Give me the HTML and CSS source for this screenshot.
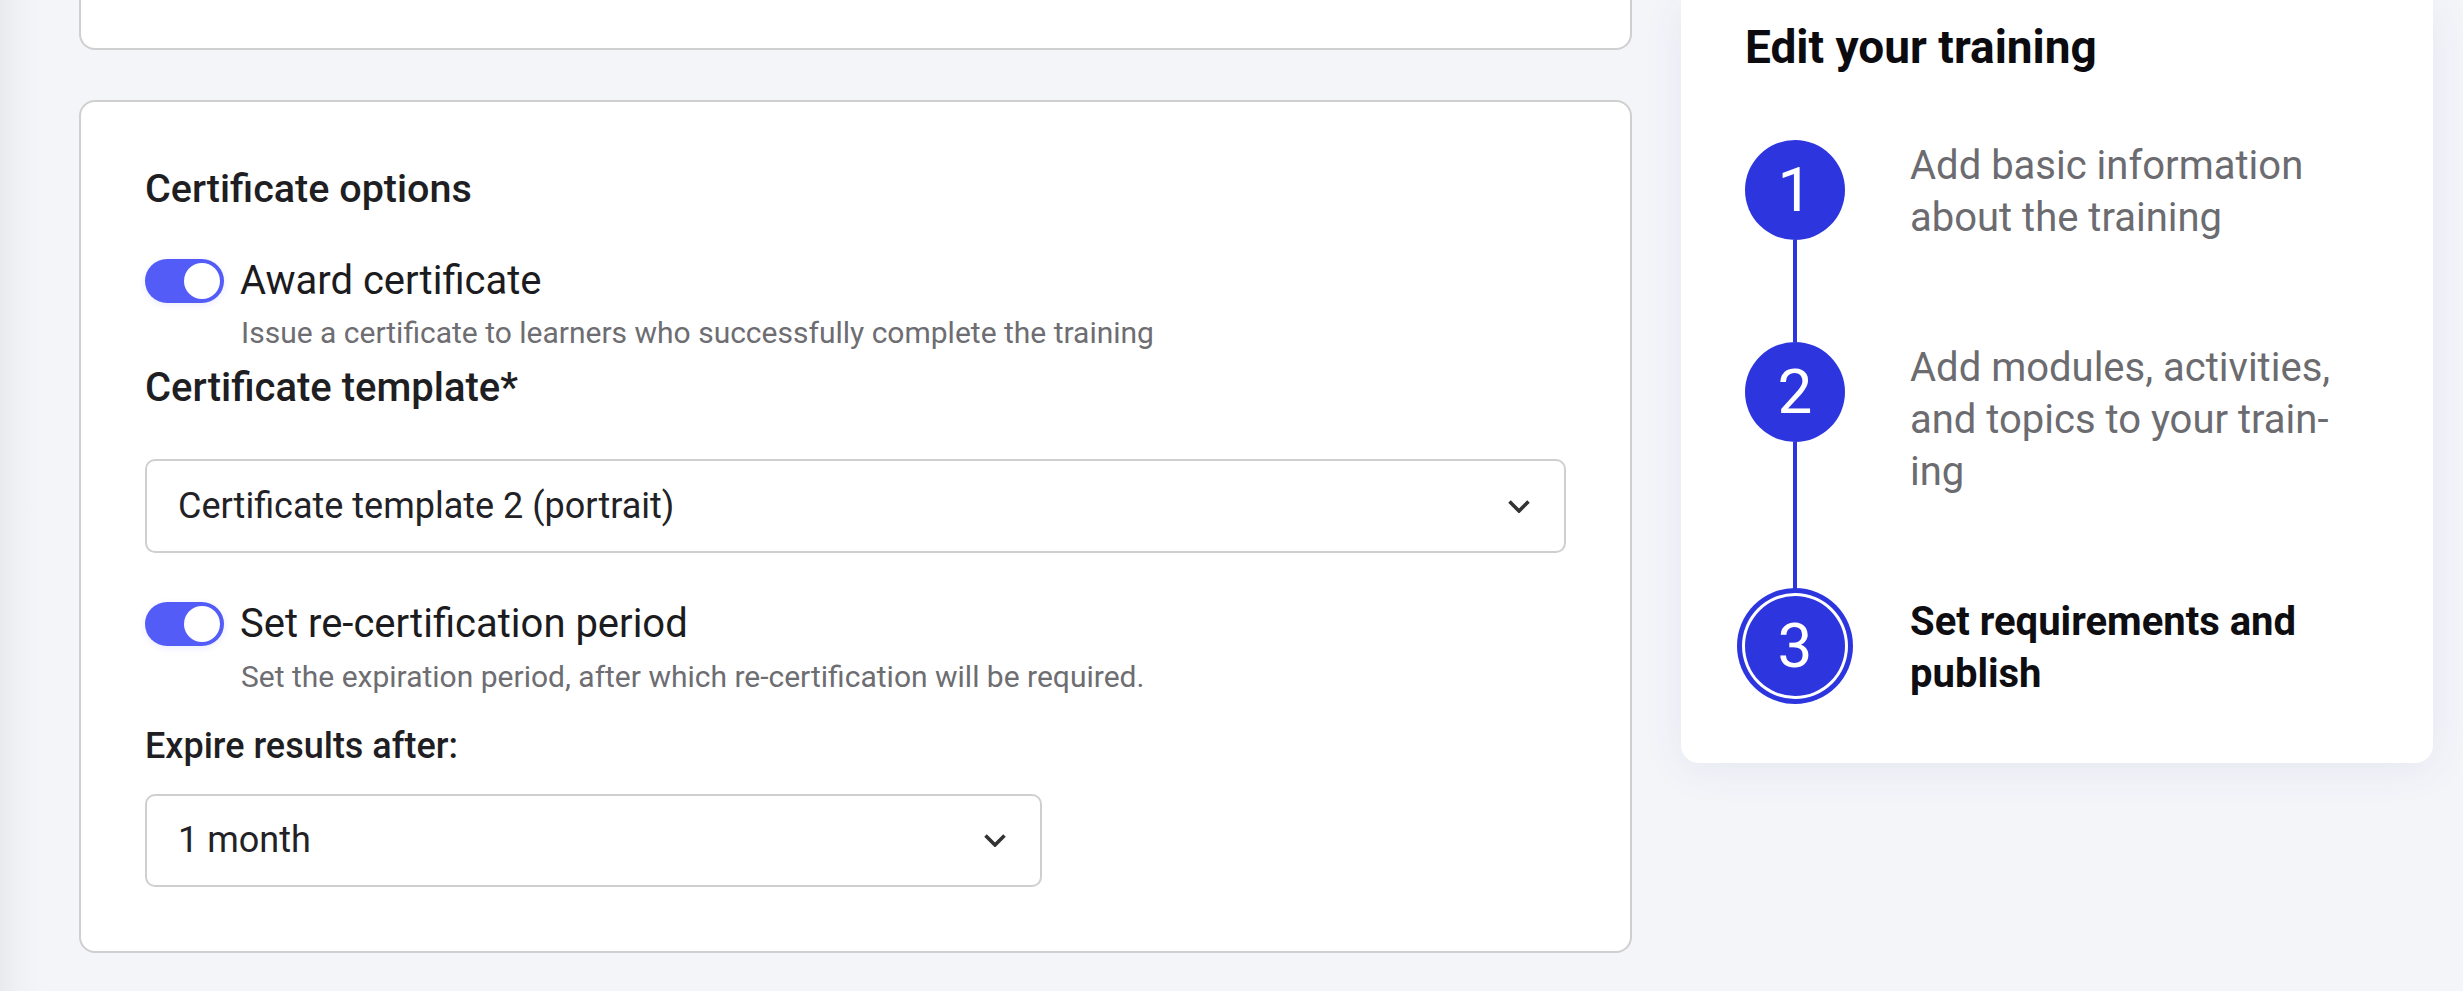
FILE: index.html
```html
<!DOCTYPE html>
<html lang="en">
<head>
<meta charset="utf-8">
<title>Certificate options</title>
<link rel="stylesheet" href="styles.css">
</head>
<body>
<div class="page">
  <div class="main">
    <div class="card card-top"></div>
    <section class="card card-cert">
      <h2 class="heading">Certificate options</h2>
      <div class="toggle-row">
        <span class="toggle"><span class="knob"></span></span>
        <span class="toggle-label">Award certificate</span>
      </div>
      <p class="desc">Issue a certificate to learners who successfully complete the training</p>
      <label class="field-label">Certificate template*</label>
      <div class="select select-wide">
        <span class="select-text">Certificate template 2 (portrait)</span>
        <svg class="chev" width="22" height="13" viewBox="0 0 22 13"><polyline points="1.5,1.5 11,11 20.5,1.5" fill="none" stroke="#333" stroke-width="3.6"/></svg>
      </div>
      <div class="toggle-row toggle-row-2">
        <span class="toggle"><span class="knob"></span></span>
        <span class="toggle-label">Set re-certification period</span>
      </div>
      <p class="desc desc-2">Set the expiration period, after which re-certification will be required.</p>
      <label class="expire-label">Expire results after:</label>
      <div class="select select-narrow">
        <span class="select-text">1 month</span>
        <svg class="chev" width="22" height="13" viewBox="0 0 22 13"><polyline points="1.5,1.5 11,11 20.5,1.5" fill="none" stroke="#333" stroke-width="3.6"/></svg>
      </div>
    </section>
  </div>
  <aside class="panel">
    <h2 class="panel-title">Edit your training</h2>
    <ol class="steps">
      <li class="step">
        <span class="circle">1</span>
        <span class="step-text">Add basic information about the training</span>
      </li>
      <li class="step">
        <span class="circle">2</span>
        <span class="step-text">Add modules, activities, and topics to your train&shy;ing</span>
      </li>
      <li class="step step-active">
        <span class="circle">3</span>
        <span class="step-text">Set requirements and publish</span>
      </li>
    </ol>
  </aside>
</div>
</body>
</html>
```

FILE: styles.css
```css
* { box-sizing: border-box; }
html, body { margin: 0; padding: 0; }
body {
  width: 2463px;
  height: 991px;
  overflow: hidden;
  font-family: Roboto, "Liberation Sans", sans-serif;
  background: linear-gradient(90deg, #e9eaee 0px, #f0f1f5 18px, #f4f5f9 42px);
}
.page {
  display: flex;
  align-items: flex-start;
  gap: 49px;
  padding-left: 79px;
}
.main {
  width: 1553px;
  display: flex;
  flex-direction: column;
}
.card {
  background: #fff;
  border: 2px solid #cfcfcf;
  border-radius: 16px;
}
.card-top {
  height: 50px;
  border-top: 0;
  border-radius: 0 0 16px 16px;
}
.card-cert {
  margin-top: 50px;
  padding: 62px 64px 64px 64px;
  display: flex;
  flex-direction: column;
  align-items: flex-start;
}
.heading {
  margin: 0;
  font-size: 39.5px;
  line-height: 50px;
  font-weight: 500;
  color: #1e1e23;
}
.toggle-row {
  display: flex;
  align-items: center;
  gap: 16px;
  margin-top: 38px;
}
.toggle-row-2 { margin-top: 42.3px; }
.toggle {
  width: 79px;
  height: 44px;
  border-radius: 22px;
  background: #535cf6;
  display: flex;
  align-items: center;
  justify-content: flex-end;
  padding-right: 4px;
  box-shadow: 0 2px 6px rgba(83, 92, 246, 0.12);
}
.knob {
  width: 36px;
  height: 36px;
  border-radius: 50%;
  background: #fff;
}
.toggle-label {
  font-size: 40px;
  line-height: 58px;
  color: #1b1b20;
}
.desc {
  margin: 2.5px 0 0 96px;
  font-size: 30px;
  line-height: 40px;
  color: #6d6d72;
}
.desc-2 { margin-top: 3.4px; }
.field-label {
  margin-top: 7px;
  font-size: 40px;
  line-height: 56px;
  font-weight: 500;
  color: #1e1e23;
}
.expire-label {
  margin-top: 25px;
  font-size: 36px;
  line-height: 48px;
  font-weight: 500;
  color: #1e1e23;
}
.select {
  display: flex;
  align-items: center;
  justify-content: space-between;
  height: 94px;
  border: 2px solid #cfcfcf;
  border-radius: 10px;
  background: #fff;
  padding: 0 34px 0 31px;
}
.select-wide { width: 100%; margin-top: 43.5px; }
.select-narrow { width: 897px; margin-top: 24.3px; height: 93px; }
.select-text {
  font-size: 36px;
  color: #222226;
}
.chev { display: block; }

.panel {
  width: 752px;
  background: #fff;
  border-radius: 0 0 18px 18px;
  padding: 20px 64px 63px 64px;
  box-shadow: 0 6px 40px rgba(70, 80, 170, 0.08);
}
.panel-title {
  margin: 0;
  font-size: 46px;
  line-height: 54px;
  font-weight: 700;
  color: #0b0b10;
}
.steps {
  list-style: none;
  margin: 65.7px 0 0 0;
  padding: 0;
}
.step {
  position: relative;
  display: flex;
  align-items: flex-start;
  gap: 65px;
  margin-bottom: 98px;
}
.step:last-child { margin-bottom: 0; }
.step:not(:last-child)::after {
  content: "";
  position: absolute;
  left: 48px;
  top: 100px;
  bottom: -98px;
  width: 4px;
  background: #2d35de;
  z-index: 0;
}
.circle {
  position: relative;
  z-index: 1;
  flex: 0 0 100px;
  width: 100px;
  height: 100px;
  border-radius: 50%;
  background: #2d35de;
  color: #fff;
  font-size: 62px;
  line-height: 100px;
  text-align: center;
}
.step-active .circle {
  box-shadow: 0 0 0 3px #fff, 0 0 0 8px #2d35de;
}
.step-text {
  flex: 1;
  font-size: 40px;
  line-height: 52px;
  color: #6b6b70;
}
.step-active .step-text {
  font-weight: 700;
  color: #0e0e12;
}
```
